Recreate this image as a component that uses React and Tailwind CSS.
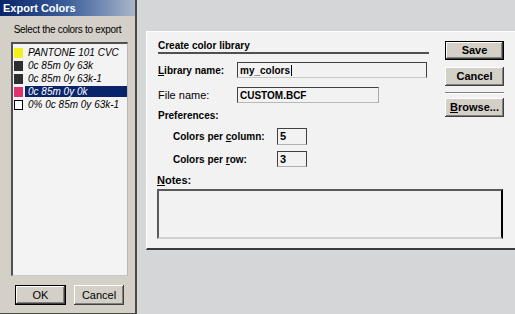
export default function App() {
  const items = [
    { c: '#f5ef1e', t: 'PANTONE 101 CVC' },
    { c: '#2e2e2e', t: '0c 85m 0y 63k' },
    { c: '#2e2e2e', t: '0c 85m 0y 63k-1' },
    { c: '#e0326c', t: '0c 85m 0y 0k', sel: true },
    { c: '#ffffff', t: '0% 0c 85m 0y 63k-1' },
  ];
  const btn =
    "flex items-center justify-center bg-[#d4d0c8] shadow-[inset_-1px_-1px_#404040,inset_1px_1px_#ffffff,inset_-2px_-2px_#808080] text-[11px] text-black";
  return (
    <div className="flex w-[515px] h-[314px] overflow-hidden font-['Liberation_Sans',Arial,sans-serif] bg-[#d5d6d8]">
      {/* Left panel */}
      <div className="flex flex-col w-[137px] h-[314px] bg-[#d4d0c8] border-r-2 border-b border-[#4a4a4a]">
        <div className="h-[16px] flex items-center pl-[3px] bg-gradient-to-r from-[#0a246a] via-[#3d5f9c] to-[#a9b6c8]">
          <span className="text-white font-bold text-[11px] leading-[12px]">Export Colors</span>
        </div>
        <div className="mt-[8px] h-[12px] text-center text-[10px] tracking-[-0.3px] leading-[12px] text-black">
          Select the colors to export
        </div>
        <div className="mt-[6px] ml-[11px] w-[117px] h-[234px] bg-[#f3f3f3] border-t-2 border-l-2 border-[#505050] border-r border-b border-r-[#b8b8b8] border-b-[#c8c8c8] pt-[2px] pl-[1px]">
          {items.map((it, i) => (
            <div key={i} className="flex items-center h-[13px]">
              <span
                className={
                  "w-[9px] h-[10px] shrink-0 " + (i === 4 ? "border border-black" : "")
                }
                style={{ backgroundColor: it.c }}
              />
              <span
                className={
                  "ml-[2px] flex-1 h-[11px] flex items-center pl-[3px] italic text-[10px] leading-[11px] whitespace-nowrap " +
                  (it.sel ? "bg-[#0a246a] text-white" : "text-black")
                }
              >
                {it.t}
              </span>
            </div>
          ))}
        </div>
        <div className="mt-[9px] flex pl-[15px] gap-[8px]">
          <div className={btn + " w-[51px] h-[20px] border border-black"}>OK</div>
          <div className={btn + " w-[50px] h-[20px]"}>Cancel</div>
        </div>
      </div>

      {/* Right area */}
      <div className="flex-1 pl-[9px] pt-[31px]">
        <div className="h-[219px] bg-[#f2f2f2] border-l border-t border-white border-b-2 border-b-[#3c3c3c] pl-[10px] pr-[11px] pt-[8px] flex flex-col text-black">
          <div className="flex h-[127px]">
            {/* fields */}
            <div className="w-[272px] flex flex-col">
              <div className="ml-[1px] h-[14px] border-b-2 border-[#505050] text-[10px] leading-[12px] font-bold">
                Create color library
              </div>
              <div className="mt-[8px] flex items-center h-[16px]">
                <span className="ml-[1px] w-[79px] text-[10px] font-bold">
                  <span className="underline">L</span>ibrary name:
                </span>
                <div className="w-[190px] h-[16px] border border-[#404040] border-b-[#c8c8c8] flex items-center pl-[2px] text-[10px] font-bold">
                  my_colors<span className="w-px h-[11px] bg-black ml-[1px]" />
                </div>
              </div>
              <div className="mt-[9px] flex items-center h-[16px]">
                <span className="ml-[1px] w-[79px] text-[11px]">File name:</span>
                <div className="w-[142px] h-[16px] border border-[#404040] border-r-[#a8a8a8] border-b-[#b8b8b8] flex items-center pl-[2px] text-[10px] font-bold">
                  CUSTOM.BCF
                </div>
              </div>
              <div className="mt-[7px] h-[12px] ml-[1px] text-[10px] leading-[12px] font-bold">Preferences:</div>
              <div className="mt-[6px] flex items-center h-[17px]">
                <span className="pl-[16px] w-[120px] text-[10px] font-bold">
                  Colors per <span className="underline">c</span>olumn:
                </span>
                <div className="w-[30px] h-[17px] border border-[#404040] border-b-[#b0b0b0] flex items-center pl-[2px] text-[11px] font-bold">
                  5
                </div>
              </div>
              <div className="mt-[6px] flex items-center h-[16px]">
                <span className="pl-[16px] w-[120px] text-[10px] font-bold">
                  Colors per <span className="underline">r</span>ow:
                </span>
                <div className="w-[30px] h-[16px] border border-[#404040] border-b-[#b0b0b0] flex items-center pl-[2px] text-[11px] font-bold">
                  3
                </div>
              </div>
            </div>
            {/* buttons */}
            <div className="ml-[16px] w-[59px] flex flex-col">
              <div className={btn + " mt-[1px] h-[19px] border border-black font-bold"}>Save</div>
              <div className={btn + " mt-[7px] h-[19px] font-bold"}>Cancel</div>
              <div className="mt-[6px] h-[2px] border-t border-[#808080] border-b border-b-white" />
              <div className={btn + " mt-[4px] h-[19px] font-bold"}>
                <span><span className="underline">B</span>rowse...</span>
              </div>
            </div>
          </div>
          <div className="mt-[7px] h-[12px] text-[11px] leading-[12px] font-bold">
            <span className="underline">N</span>otes:
          </div>
          <div className="mt-[3px] w-[346px] h-[50px] border-t-2 border-l-2 border-[#5a5a5a] border-r-2 border-r-black border-b-2 border-b-[#d0d0d0] bg-[#f2f2f2]" />
        </div>
      </div>
    </div>
  );
}
